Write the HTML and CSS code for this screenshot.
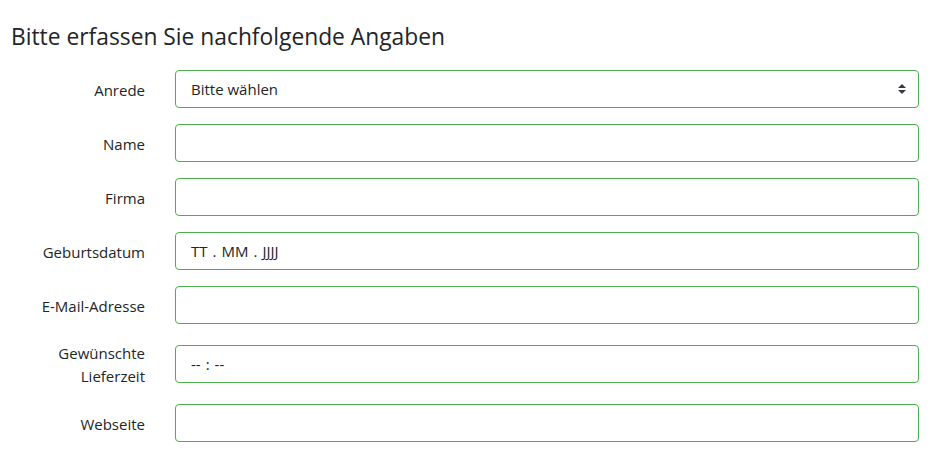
FILE: index.html
```html
<!DOCTYPE html>
<html lang="de">
<head>
<meta charset="utf-8">
<title>Angaben</title>
<link rel="stylesheet" href="styles.css">
</head>
<body>
<main class="page">
  <h1 class="title">Bitte erfassen Sie nachfolgende Angaben</h1>
  <form class="form">
    <div class="row">
      <label class="label">Anrede</label>
      <div class="field select">
        <span class="value">Bitte wählen</span>
        <svg class="arrows" width="8" height="12" viewBox="0 0 8 12"><path d="M4 1 L8 5 H0 Z M4 11 L8 7 H0 Z" fill="#343a40"/></svg>
      </div>
    </div>
    <div class="row">
      <label class="label">Name</label>
      <div class="field"></div>
    </div>
    <div class="row">
      <label class="label">Firma</label>
      <div class="field"></div>
    </div>
    <div class="row">
      <label class="label">Geburtsdatum</label>
      <div class="field"><span class="value">TT<span class="sep">.</span>MM<span class="sep">.</span>JJJJ</span></div>
    </div>
    <div class="row">
      <label class="label">E-Mail-Adresse</label>
      <div class="field"></div>
    </div>
    <div class="row tall">
      <label class="label two">Gewünschte<br>Lieferzeit</label>
      <div class="field"><span class="value">--<span class="sep">:</span>--</span></div>
    </div>
    <div class="row">
      <label class="label">Webseite</label>
      <div class="field"></div>
    </div>
  </form>
</main>
</body>
</html>
```
FILE: styles.css
```css
html, body {
  margin: 0;
  padding: 0;
  background: #fff;
}
body {
  font-family: "Open Sans", "Noto Sans", sans-serif;
  color: #212529;
}
.page {
  padding: 22px 31px 0 11px;
}
.title {
  margin: 0 0 18px 0;
  font-size: 22.8px;
  font-weight: 400;
  line-height: 30px;
  color: #212529;
}
.form {
  display: flex;
  flex-direction: column;
  gap: 16px;
}
.row {
  display: grid;
  grid-template-columns: 134px 1fr;
  column-gap: 30px;
  align-items: center;
}
.row.tall {
  min-height: 48px;
}
.label {
  text-align: right;
  font-size: 15px;
  line-height: 24px;
  padding-top: 1px;
}
.label.two {
  line-height: 23px;
}
.field {
  height: 38px;
  box-sizing: border-box;
  border: 1px solid #4cae4f;
  border-radius: 4px;
  display: flex;
  align-items: center;
  padding: 0 15px;
  font-size: 15px;
  color: #212529;
}
.select {
  justify-content: space-between;
  padding-right: 12px;
}
.value {
  white-space: pre;
}
.sep {
  margin: 0 5px;
}
.arrows {
  display: block;
}
```
